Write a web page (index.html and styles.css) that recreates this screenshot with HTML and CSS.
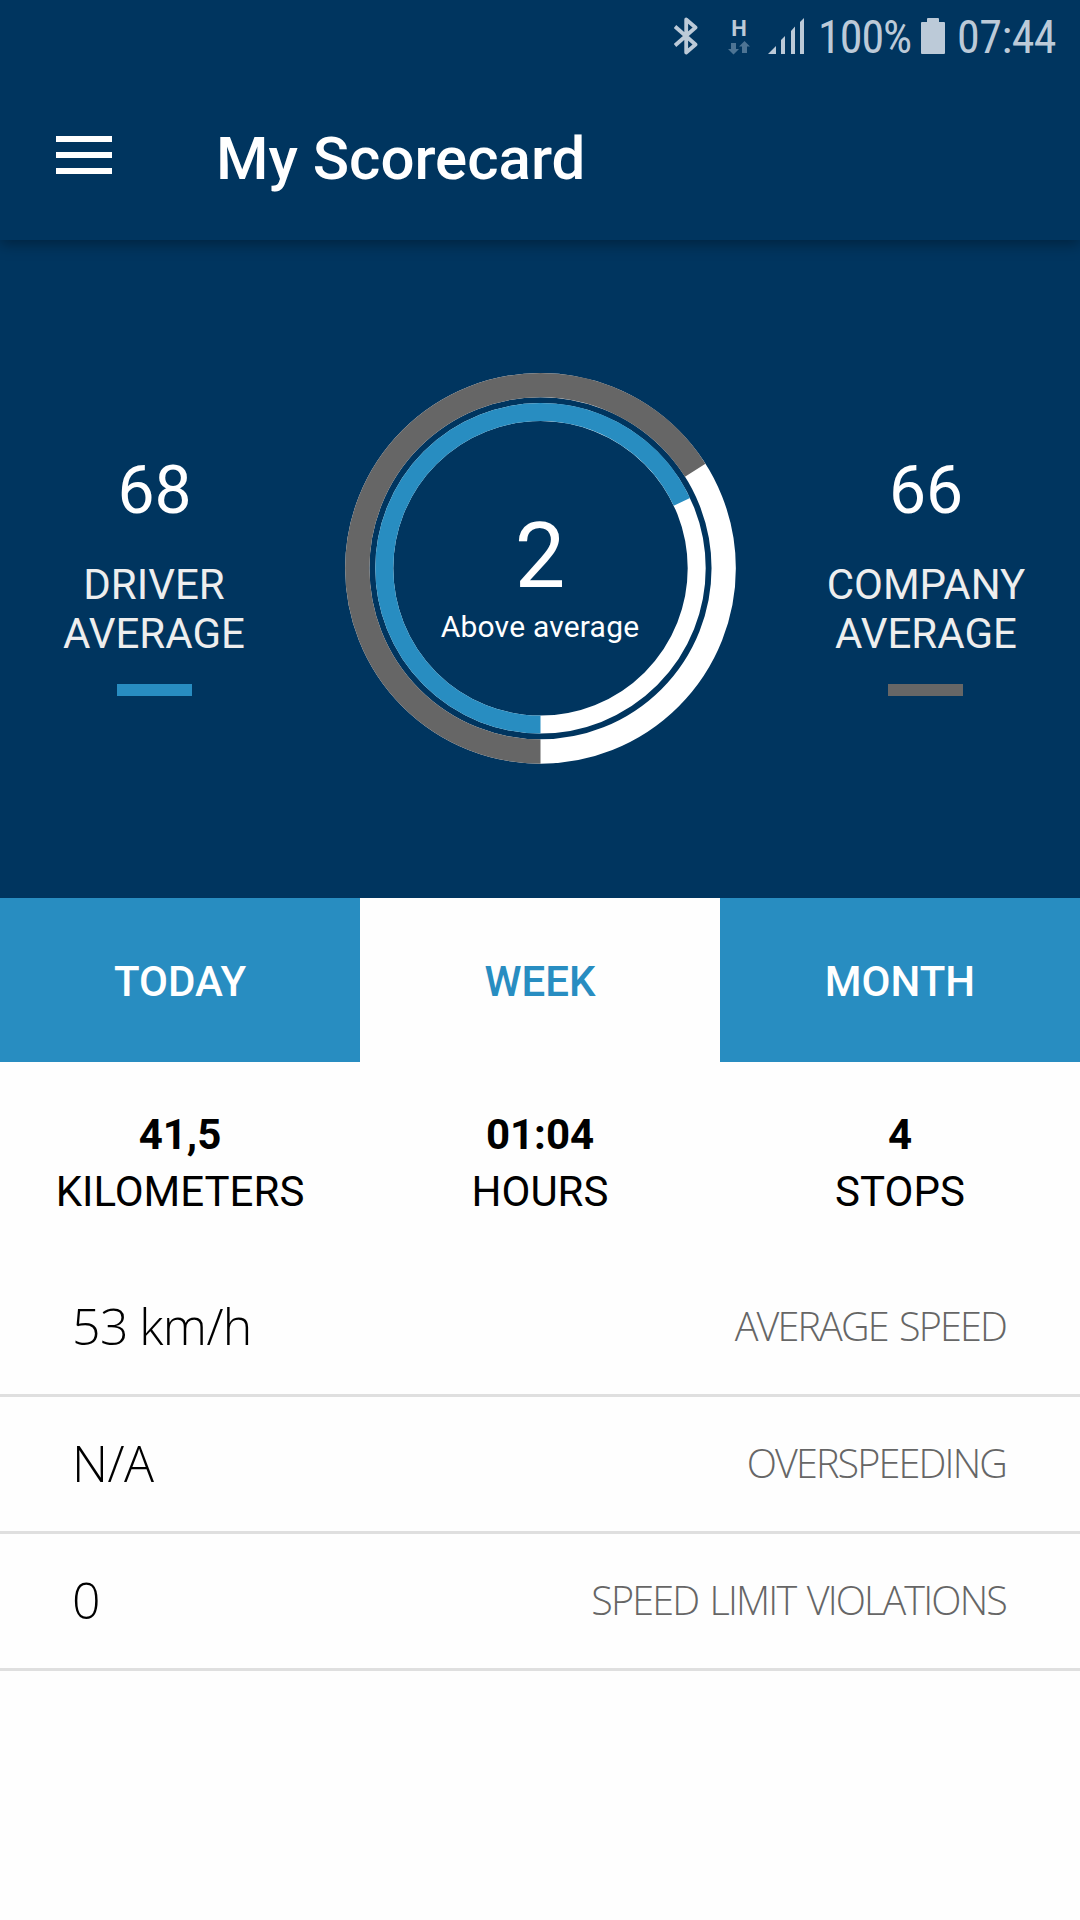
FILE: index.html
```html
<!DOCTYPE html>
<html lang="en">
<head>
    <meta charset="UTF-8">
    <meta name="viewport" content="width=device-width, initial-scale=1.0">
    <title>My Scorecard</title>
    <link rel="stylesheet" href="styles.css">
</head>
<body>
    <div class="status-bar">
        <svg class="icon-bluetooth" width="24" height="38" viewBox="0 0 24 38" fill="none" stroke="currentColor" stroke-width="3.8" stroke-linejoin="round">
            <path d="M1 9.500L21.500 27.500L12.200 35.500V2.500L21.500 10.500L1 28.500"/>
        </svg>
        <div class="network">
            <span class="network-type">H</span>
            <svg width="22" height="14" viewBox="0 0 22 14" fill="currentColor">
                <path d="M3 2h5v6h3L5.500 13.500 0 8h3zM14 12h5V5.500h3L16.500 0 11 5.500h3z"/>
            </svg>
        </div>
        <svg class="icon-signal" width="36" height="37" viewBox="0 0 36 37" fill="currentColor">
            <path d="M0 36L8 28V36zM13 36V22L17 18V36zM23 36V13L27 8.500V36zM32 36V4L36 0V36z"/>
        </svg>
        <span class="status-text battery-level">100%</span>
        <svg class="icon-battery" width="24" height="36" viewBox="0 0 24 36" fill="currentColor">
            <path d="M7 0h10q1 0 1 1v3h5q1 0 1 1v30q0 1-1 1H1q-1 0-1-1V5q0-1 1-1h5V1q0-1 1-1z"/>
        </svg>
        <span class="status-text clock">07:44</span>
    </div>

    <header class="app-bar">
        <svg class="menu" width="56" height="38" viewBox="0 0 56 38" fill="currentColor">
            <path d="M0 0h56v6H0zM0 16h56v6H0zM0 32h56v6H0z"/>
        </svg>
        <h1>My Scorecard</h1>
    </header>

    <section class="score">
        <div class="average driver">
            <div class="value">68</div>
            <div class="label">DRIVER<br>AVERAGE</div>
            <div class="legend"></div>
        </div>
        <div class="gauge">
            <svg width="392" height="392" viewBox="-196.500 -196.300 392 392" fill="none">
                <g transform="rotate(90)">
                    <circle r="183.200" stroke="#fff" stroke-width="24.300"/>
                    <circle r="183.200" stroke="#666" stroke-width="24.300" pathLength="100" stroke-dasharray="66 34"/>
                    <circle r="156.200" stroke="#fff" stroke-width="18"/>
                    <circle r="156.200" stroke="#288dc1" stroke-width="18" pathLength="100" stroke-dasharray="68 32"/>
                </g>
            </svg>
            <div class="gauge-text">
                <div class="difference">2</div>
                <div class="caption">Above average</div>
            </div>
        </div>
        <div class="average company">
            <div class="value">66</div>
            <div class="label">COMPANY<br>AVERAGE</div>
            <div class="legend"></div>
        </div>
    </section>

    <nav class="tabs">
        <div class="tab">TODAY</div>
        <div class="tab active">WEEK</div>
        <div class="tab">MONTH</div>
    </nav>

    <section class="totals">
        <div><b>41,5</b><br>KILOMETERS</div>
        <div><b>01:04</b><br>HOURS</div>
        <div><b>4</b><br>STOPS</div>
    </section>

    <section class="details">
        <div class="row"><span class="row-value">53 km/h</span><span class="row-label">AVERAGE SPEED</span></div>
        <div class="row"><span class="row-value">N/A</span><span class="row-label">OVERSPEEDING</span></div>
        <div class="row"><span class="row-value">0</span><span class="row-label">SPEED LIMIT VIOLATIONS</span></div>
    </section>
</body>
</html>
```
FILE: styles.css
```css
* {
    box-sizing: border-box;
}
body {
    margin: 0;
    font-family: Roboto, sans-serif;
    font-size: 42px;
    background-color: #fefefe;
    color: #000;
}
svg {
    display: block;
    flex: none;
}
.status-bar {
    position: relative;
    z-index: 1;
    display: flex;
    justify-content: flex-end;
    height: 72px;
    padding-right: 22px;
    background-color: #00355f;
    color: #bccad8;
}
.icon-bluetooth {
    margin-top: 17px;
}
.network {
    display: flex;
    flex-direction: column;
    align-items: center;
    width: 22px;
    margin: 17px 18px 0 30px;
    color: #4d7494;
}
.network-type {
    height: 24px;
    font-size: 22px;
    line-height: 24px;
    font-weight: 700;
    color: #bccad8;
}
.icon-signal {
    margin-top: 18px;
}
.status-text {
    padding-top: 2px;
    font-size: 46px;
    line-height: 70px;
    font-stretch: 75%;
    font-family: "Roboto Condensed", Roboto, sans-serif;
}
.battery-level {
    width: 92px;
    margin: 0 11px 0 14px;
    letter-spacing: -1px;
}
.clock {
    width: 101px;
    letter-spacing: -0.5px;
}
.icon-battery {
    margin: 18px 12px 0 0;
}
.app-bar {
    position: relative;
    display: flex;
    height: 168px;
    background-color: #00355f;
    color: #fff;
    box-shadow: 0 4px 14px rgba(0, 0, 0, 0.35);
}
.menu {
    margin: 64px 104px 0 56px;
}
.app-bar h1 {
    margin: 0;
    padding-top: 47px;
    font-size: 60px;
    line-height: 80px;
    font-weight: 500;
}
.score {
    display: grid;
    grid-template-columns: 309px 462px 309px;
    height: 658px;
    background-color: #00355f;
    color: #fff;
}
.average {
    display: flex;
    flex-direction: column;
    align-items: center;
    padding-top: 211px;
    text-align: center;
}
.value {
    font-size: 66px;
    line-height: 80px;
}
.label {
    margin: 29px 0 26px;
    line-height: 49px;
    color: #eee;
}
.legend {
    width: 75px;
    height: 12px;
}
.driver .label {
    padding-right: 1px;
}
.driver .legend {
    background-color: #288dc1;
}
.company .value,
.company .label {
    padding-left: 1px;
}
.company .legend {
    background-color: #666;
}
.gauge {
    display: grid;
    justify-items: center;
    align-items: start;
    padding-top: 132px;
}
.gauge > * {
    grid-area: 1 / 1;
}
.gauge-text {
    padding-top: 140px;
    text-align: center;
}
.difference {
    font-size: 90px;
    line-height: 90px;
}
.caption {
    margin-top: 7px;
    font-size: 30px;
    line-height: 36px;
    letter-spacing: 0.2px;
}
.tabs {
    display: grid;
    grid-template-columns: repeat(3, 1fr);
    height: 164px;
}
.tab {
    padding-top: 3px;
    line-height: 161px;
    font-weight: 500;
    text-align: center;
    background-color: #288dc1;
    color: #fff;
}
.tab.active {
    background-color: #fefefe;
    color: #288dc1;
}
.totals {
    display: grid;
    grid-template-columns: repeat(3, 1fr);
    padding: 44px 0 40px;
    line-height: 57px;
    text-align: center;
}
.row {
    display: flex;
    justify-content: space-between;
    align-items: center;
    height: 137px;
    padding: 0 72px 3px;
    border-bottom: 3px solid #dfdfdf;
    font-family: "Open Sans", sans-serif;
    font-weight: 300;
}
.row-value {
    font-size: 50px;
    letter-spacing: -0.6px;
    word-spacing: -1px;
}
.row-label {
    margin-right: 2px;
    font-size: 39.5px;
    letter-spacing: -1.85px;
    word-spacing: 3px;
    color: #666;
}
```
